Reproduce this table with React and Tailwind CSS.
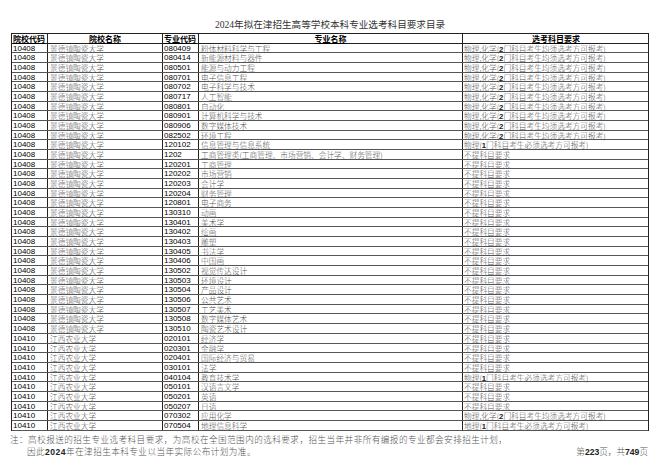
const SANS = "font-['Liberation_Sans','Noto_Sans_CJK_SC',sans-serif]";
const CJK = "font-['Noto_Sans_CJK_SC',sans-serif]";

const JD = ["10408", "景德镇陶瓷大学"];
const JX = ["10410", "江西农业大学"];

const rows = [
  [JD, "080409", "粉体材料科学与工程", "A"],
  [JD, "080414", "新能源材料与器件", "A"],
  [JD, "080501", "能源与动力工程", "A"],
  [JD, "080701", "电子信息工程", "A"],
  [JD, "080702", "电子科学与技术", "A"],
  [JD, "080717", "人工智能", "A"],
  [JD, "080801", "自动化", "A"],
  [JD, "080901", "计算机科学与技术", "A"],
  [JD, "080906", "数字媒体技术", "A"],
  [JD, "082502", "环境工程", "A"],
  [JD, "120102", "信息管理与信息系统", "P"],
  [JD, "1202", "工商管理类(工商管理、市场营销、会计学、财务管理)", "N"],
  [JD, "120201", "工商管理", "N"],
  [JD, "120202", "市场营销", "N"],
  [JD, "120203", "会计学", "N"],
  [JD, "120204", "财务管理", "N"],
  [JD, "120801", "电子商务", "N"],
  [JD, "130310", "动画", "N"],
  [JD, "130401", "美术学", "N"],
  [JD, "130402", "绘画", "N"],
  [JD, "130403", "雕塑", "N"],
  [JD, "130405", "书法学", "N"],
  [JD, "130406", "中国画", "N"],
  [JD, "130502", "视觉传达设计", "N"],
  [JD, "130503", "环境设计", "N"],
  [JD, "130504", "产品设计", "N"],
  [JD, "130506", "公共艺术", "N"],
  [JD, "130507", "工艺美术", "N"],
  [JD, "130508", "数字媒体艺术", "N"],
  [JD, "130510", "陶瓷艺术设计", "N"],
  [JX, "020101", "经济学", "N"],
  [JX, "020301", "金融学", "N"],
  [JX, "020401", "国际经济与贸易", "N"],
  [JX, "030101", "法学", "N"],
  [JX, "040104", "教育技术学", "P"],
  [JX, "050101", "汉语言文学", "N"],
  [JX, "050201", "英语", "N"],
  [JX, "050207", "日语", "N"],
  [JX, "070302", "应用化学", "A"],
  [JX, "070504", "地理信息科学", "G"],
];

const Num = ({ children }) => (
  <span className="font-['Liberation_Sans',sans-serif] font-bold text-[#222]">{children}</span>
);

const Requirement = ({ kind }) => {
  if (kind === "A")
    return (
      <>
        物理,化学(<Num>2</Num>门科目考生均须选考方可报考)
      </>
    );
  if (kind === "P")
    return (
      <>
        物理(<Num>1</Num>门科目考生必须选考方可报考)
      </>
    );
  if (kind === "G")
    return (
      <>
        地理(<Num>1</Num>门科目考生必须选考方可报考)
      </>
    );
  return <>不提科目要求</>;
};

const Row = ({ row }) => {
  const [[schoolCode, school], code, major, req] = row;
  return (
    <div className="flex h-[9.68px] border-b border-[#555] leading-[9px] whitespace-nowrap">
      <div className={`w-[36px] shrink-0 border-r border-[#222] pl-[1px] text-[8px] text-black ${SANS}`}>
        {schoolCode}
      </div>
      <div className={`w-[115px] shrink-0 border-r border-[#222] pl-[2px] text-[7.7px] font-light text-[#555] ${CJK}`}>
        {school}
      </div>
      <div className={`w-[36px] shrink-0 border-r border-[#222] pl-[1px] text-[8px] text-black ${SANS}`}>
        {code}
      </div>
      <div className={`w-[264px] shrink-0 border-r border-[#222] pl-[2px] text-[7.7px] font-light text-[#555] ${CJK}`}>
        {major}
      </div>
      <div className={`w-[186px] shrink-0 pl-[1px] text-[7.7px] font-light text-[#555] ${CJK}`}>
        <Requirement kind={req} />
      </div>
    </div>
  );
};

export default function App() {
  return (
    <div className="w-[660px] h-[466px] bg-white relative overflow-hidden">
      <div className="pt-[19px] h-[33px] text-center text-[9.6px] leading-[12px] text-[#333] font-['Liberation_Serif','Noto_Sans_CJK_SC',serif]">
        2024年拟在津招生高等学校本科专业选考科目要求目录
      </div>
      <div className="ml-[11px] w-[638px] border-l border-t border-r border-[#222]">
        <div className={`flex h-[9.68px] border-b border-[#222] leading-[9px] text-[8px] font-bold text-black whitespace-nowrap ${CJK}`}>
          <div className="w-[36px] shrink-0 border-r border-[#222] pl-[1px] underline">院校代码</div>
          <div className="w-[115px] shrink-0 border-r border-[#222] text-center underline">院校名称</div>
          <div className="w-[36px] shrink-0 border-r border-[#222] pl-[1px] underline">专业代码</div>
          <div className="w-[264px] shrink-0 border-r border-[#222] text-center underline">专业名称</div>
          <div className="w-[186px] shrink-0 text-center underline">选考科目要求</div>
        </div>
        {rows.map((row, i) => (
          <Row key={i} row={row} />
        ))}
      </div>
      <div className={`mt-[2px] pl-[10px] pr-[12px] text-[8.6px] leading-[12px] text-[#555] font-light tracking-[0.45px] whitespace-nowrap ${CJK}`}>
        <div>注：高校报送的招生专业选考科目要求，为高校在全国范围内的选科要求，招生当年并非所有编报的专业都会安排招生计划，</div>
        <div className="flex">
          <span className="pl-[17px]">
            因此<Num>2024</Num>年在津招生本科专业以当年实际公布计划为准。
          </span>
          <span className="ml-auto tracking-normal">
            第<Num>223</Num>页，共<Num>749</Num>页
          </span>
        </div>
      </div>
    </div>
  );
}
